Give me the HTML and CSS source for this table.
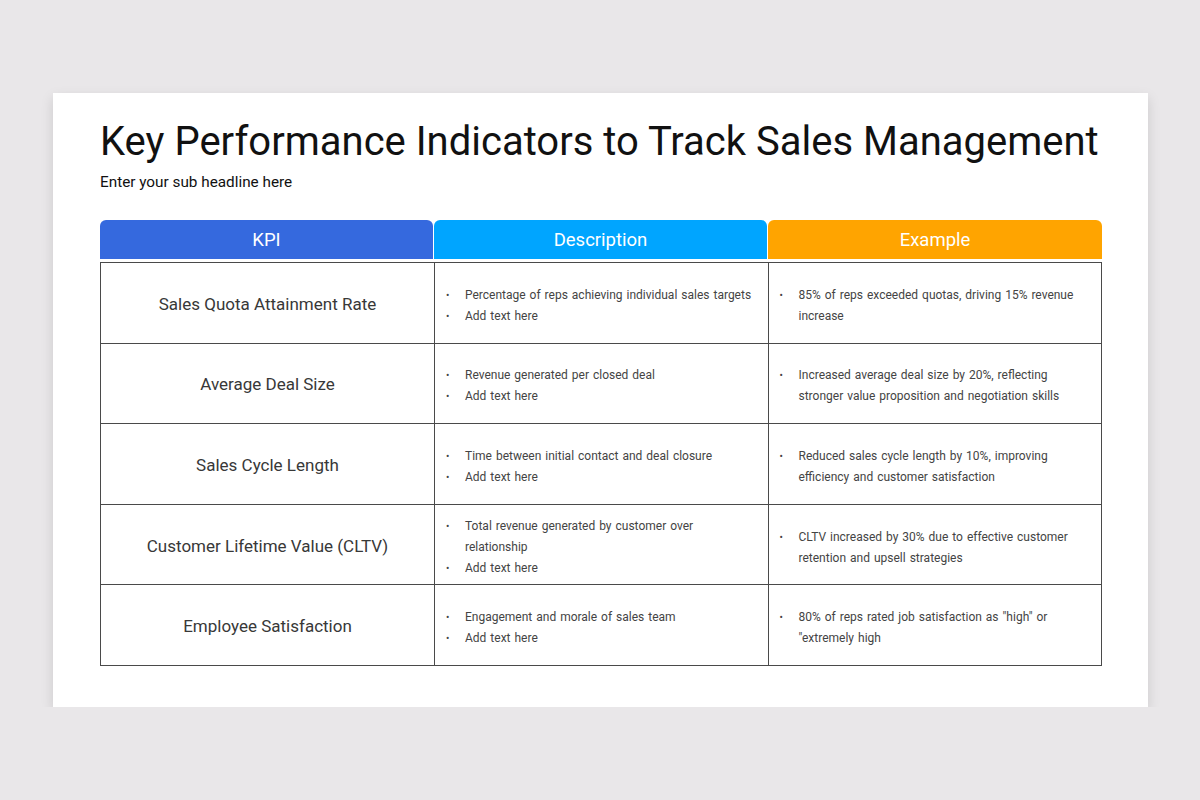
FILE: index.html
```html
<!DOCTYPE html>
<html>
<head>
<meta charset="utf-8">
<link rel="stylesheet" href="styles.css">
</head>
<body>
<div class="slide">
  <h1 class="title">Key Performance Indicators to Track Sales Management</h1>
  <p class="sub">Enter your sub headline here</p>
  <div class="heads">
    <div class="head kpi">KPI</div>
    <div class="head desc">Description</div>
    <div class="head ex">Example</div>
  </div>
  <table class="grid">
    <tr>
      <td class="name">Sales Quota Attainment Rate</td>
      <td><ul><li>Percentage of reps achieving individual sales targets</li><li>Add text here</li></ul></td>
      <td><ul><li>85% of reps exceeded quotas, driving 15% revenue increase</li></ul></td>
    </tr>
    <tr>
      <td class="name">Average Deal Size</td>
      <td><ul><li>Revenue generated per closed deal</li><li>Add text here</li></ul></td>
      <td><ul><li>Increased average deal size by 20%, reflecting stronger value proposition and negotiation skills</li></ul></td>
    </tr>
    <tr>
      <td class="name">Sales Cycle Length</td>
      <td><ul><li>Time between initial contact and deal closure</li><li>Add text here</li></ul></td>
      <td><ul><li>Reduced sales cycle length by 10%, improving efficiency and customer satisfaction</li></ul></td>
    </tr>
    <tr>
      <td class="name">Customer Lifetime Value (CLTV)</td>
      <td><ul><li>Total revenue generated by customer over relationship</li><li>Add text here</li></ul></td>
      <td><ul><li>CLTV increased by 30% due to effective customer retention and upsell strategies</li></ul></td>
    </tr>
    <tr>
      <td class="name">Employee Satisfaction</td>
      <td><ul><li>Engagement and morale of sales team</li><li>Add text here</li></ul></td>
      <td><ul><li>80% of reps rated job satisfaction as "high" or "extremely high</li></ul></td>
    </tr>
  </table>
</div>
</body>
</html>
```
FILE: styles.css
```css
html, body {
  margin: 0;
  padding: 0;
  background: #e9e7e9;
  font-family: Roboto, "Liberation Sans", sans-serif;
}
.slide {
  margin: 93px 0 0 53px;
  width: 1095px;
  height: 614px;
  box-sizing: border-box;
  padding: 0 46px 0 47px;
  background: #ffffff;
  box-shadow: 0 5px 12px rgba(0, 0, 0, 0.13);
}
.title {
  margin: 0;
  padding-top: 25px;
  font-size: 40px;
  font-weight: 400;
  line-height: 48px;
  color: #111111;
  white-space: nowrap;
}
.sub {
  margin: 7px 0 0;
  font-size: 15.3px;
  line-height: 18px;
  color: #111111;
}
.heads {
  margin-top: 29px;
  display: grid;
  grid-template-columns: 333px 333px 334px;
  column-gap: 1px;
  width: 1002px;
}
.head {
  height: 39px;
  display: flex;
  align-items: center;
  justify-content: center;
  color: #ffffff;
  font-size: 18.5px;
  border-radius: 6px 6px 0 0;
}
.kpi { background: #3569de; }
.desc { background: #00a5ff; }
.ex { background: #ffa400; }
.grid {
  margin-top: 3px;
  width: 1002px;
  border-collapse: collapse;
  table-layout: fixed;
}
.grid td {
  border: 1px solid #4a4a4a;
  height: 80.6px;
  padding: 6px 0 0;
  vertical-align: middle;
  box-sizing: border-box;
}
.grid td.name {
  width: 334px;
  padding-top: 2px;
  text-align: center;
  font-size: 17px;
  color: #383838;
}
.grid ul {
  list-style: none;
  margin: 0;
  padding: 0 12px 0 30px;
}
.grid li {
  position: relative;
  font-size: 12px;
  line-height: 21px;
  word-spacing: 1px;
  color: #444444;
}
.grid li::before {
  content: "•";
  position: absolute;
  left: -19px;
  font-size: 10px;
}
```
